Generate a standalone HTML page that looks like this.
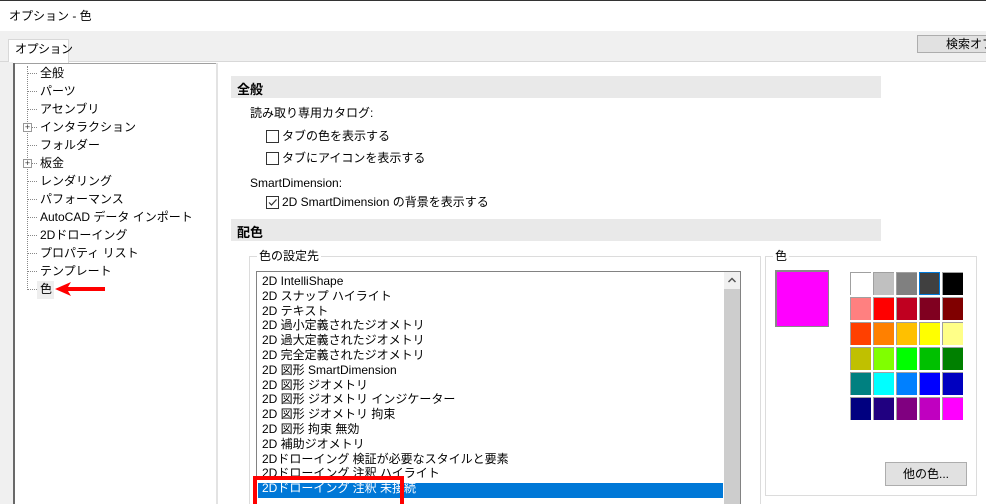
<!DOCTYPE html>
<html><head><meta charset="utf-8"><style>
*{margin:0;padding:0;box-sizing:border-box}
html,body{width:986px;height:504px;overflow:hidden}
body{background:#fff;font-family:"Liberation Sans","Noto Sans CJK JP",sans-serif;font-size:12px;color:#000;position:relative}
.a{position:absolute;white-space:nowrap}
.t{line-height:16px}
.cell{position:absolute;width:21px;height:23px;border-top:1px solid #a0a0a0;border-left:1px solid #a0a0a0}
.cb{position:absolute;width:13px;height:13px;border:1px solid #333;background:#fff}
</style></head><body>
<div class="a" style="left:0;top:0;width:986px;height:1px;background:#333"></div>
<div class="a t" style="left:9px;top:8px;font-size:12px">オプション - 色</div>
<div class="a" style="left:0;top:31px;width:986px;height:30px;background:#f0f0f0"></div>
<div class="a" style="left:0;top:61px;width:986px;height:1px;background:#d8d8d8"></div>
<div class="a" style="left:8px;top:39px;width:61px;height:24px;background:#fff;border:1px solid #d8d8d8;border-bottom:none"></div>
<div class="a t" style="left:15px;top:41px;letter-spacing:-0.5px">オプション</div>
<div class="a" style="left:917px;top:35px;width:80px;height:18px;background:#e1e1e1;border:1px solid #adadad"></div>
<div class="a t" style="left:946px;top:36px">検索オプ</div>
<div class="a" style="left:0;top:62px;width:13px;height:442px;background:#f0f0f0"></div>
<div class="a" style="left:13px;top:63px;width:2px;height:441px;background:#696969"></div>
<div class="a" style="left:15px;top:63px;width:202px;height:1px;background:#a0a0a0"></div>
<div class="a" style="left:216px;top:63px;width:2px;height:441px;background:#e3e3e3"></div>
<div class="a" style="left:27px;top:66px;height:224px;border-left:1px dotted #888"></div>
<div class="a" style="left:37px;top:281px;width:17px;height:18px;background:#eee"></div>
<div id="tree"></div>
<svg class="a" style="left:55px;top:282px" width="50" height="14"><polygon points="0,7 16,0 13,5 50,5 50,9 13,9 16,14" fill="#f00"/></svg>

<div class="a" style="left:231px;top:76px;width:650px;height:22px;background:#e9e9e9"></div>
<div class="a" style="left:237px;top:79px;font-weight:bold;font-size:13px">全般</div>
<div class="a t" style="left:250px;top:105px">読み取り専用カタログ:</div>
<div class="cb" style="left:266px;top:130px"></div><div class="a t" style="left:282px;top:128px">タブの色を表示する</div>
<div class="cb" style="left:266px;top:152px"></div><div class="a t" style="left:282px;top:150px">タブにアイコンを表示する</div>
<div class="a t" style="left:250px;top:175px">SmartDimension:</div>
<div class="cb" style="left:266px;top:196px"></div><svg class="a" style="left:267px;top:197px" width="11" height="11"><path d="M2 5.5 L4.5 8 L9.5 2.5" stroke="#333" fill="none" stroke-width="1.2"/></svg>
<div class="a t" style="left:282px;top:194px">2D SmartDimension の背景を表示する</div>
<div class="a" style="left:231px;top:219px;width:650px;height:22px;background:#e9e9e9"></div>
<div class="a" style="left:237px;top:222px;font-weight:bold;font-size:13px">配色</div>

<div class="a" style="left:249px;top:256px;width:512px;height:260px;border:1px solid #dcdcdc"></div>
<div class="a t" style="left:257px;top:248px;background:#fff;padding:0 2px">色の設定先</div>
<div class="a" style="left:256px;top:271px;width:485px;height:240px;border:1px solid #828282;background:#fff"></div>
<div class="a" style="left:724px;top:272px;width:16px;height:232px;background:#cdcdcd"></div>
<div class="a" style="left:724px;top:272px;width:16px;height:17px;background:#f0f0f0"></div>
<svg class="a" style="left:727px;top:276px" width="10" height="8"><path d="M1.5 6 L5 2.5 L8.5 6" stroke="#555" fill="none" stroke-width="1.5"/></svg>
<div class="a" style="left:258px;top:483px;width:465px;height:15px;background:#0078d7"></div>
<div id="list"></div>
<div class="a" style="left:253px;top:476px;width:151px;height:28px;border:4px solid #f00;border-bottom:none"></div>

<div class="a" style="left:765px;top:256px;width:212px;height:240px;border:1px solid #dcdcdc"></div>
<div class="a t" style="left:773px;top:248px;background:#fff;padding:0 2px">色</div>
<div class="a" style="left:775px;top:270px;width:54px;height:57px;background:#f0f;border:2px solid #888;border-right-width:1px;border-bottom-width:1px"></div>
<div id="grid"></div>
<div class="a" style="left:885px;top:462px;width:82px;height:24px;background:#e1e1e1;border:1px solid #adadad;text-align:center;line-height:22px">他の色...</div>
<script>
var tr=["全般","パーツ","アセンブリ","インタラクション","フォルダー","板金","レンダリング","パフォーマンス","AutoCAD データ インポート","2Dドローイング","プロパティ リスト","テンプレート","色"],h="";
tr.forEach(function(s,i){var y=73+i*18;h+='<div class="a" style="left:28px;top:'+y+'px;width:9px;border-top:1px dotted #888"></div><div class="a t" style="left:40px;top:'+(y-8)+'px">'+s+'</div>';
if(i==3||i==5)h+='<div class="a" style="left:23px;top:'+(y-4)+'px;width:9px;height:9px;border:1px solid #999;background:#fff;font-size:9px;line-height:7px;text-align:center;color:#333">+</div>';});
document.getElementById('tree').outerHTML=h;
var li=["2D IntelliShape","2D スナップ ハイライト","2D テキスト","2D 過小定義されたジオメトリ","2D 過大定義されたジオメトリ","2D 完全定義されたジオメトリ","2D 図形 SmartDimension","2D 図形 ジオメトリ","2D 図形 ジオメトリ インジケーター","2D 図形 ジオメトリ 拘束","2D 図形 拘束 無効","2D 補助ジオメトリ","2Dドローイング 検証が必要なスタイルと要素","2Dドローイング 注釈 ハイライト","2Dドローイング 注釈 未接続"];h="";
li.forEach(function(s,i){h+='<div class="a t" style="left:262px;top:'+(273+i*14.8)+'px;height:15px;overflow:hidden;'+(i==14?'color:#fff':'')+'">'+s+'</div>';});
document.getElementById('list').outerHTML=h;
var c=["#fff","#c0c0c0","#808080","#404040","#000","#ff8080","#f00","#c00020","#800020","#800000","#ff4000","#ff8000","#ffc000","#ff0","#ff8","#c0c000","#80ff00","#0f0","#00c000","#008000","#008080","#0ff","#0080ff","#00f","#0000c0","#000080","#200080","#800080","#c000c0","#f0f"];h="";
c.forEach(function(v,i){var x=850+(i%5)*23,y=272+Math.floor(i/5)*25;h+='<div class="cell" style="left:'+x+'px;top:'+y+'px;background:'+v+(i==3?';border:1px solid #0078d7':'')+'"></div>';});
document.getElementById('grid').outerHTML=h;
</script>
</body></html>
